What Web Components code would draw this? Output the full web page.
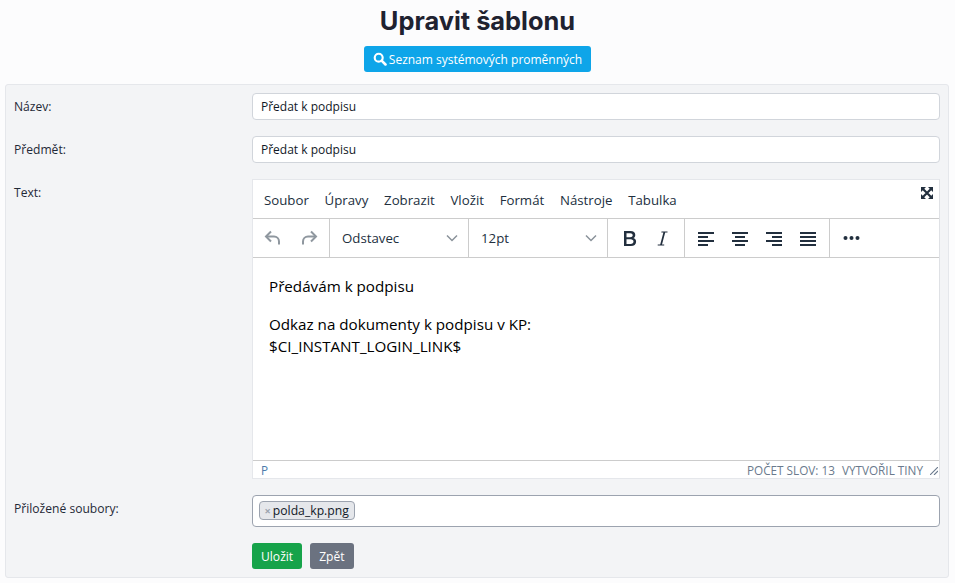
<!DOCTYPE html>
<html lang="cs">
<head>
<meta charset="utf-8">
<title>Upravit šablonu</title>
<style>
    html, body { margin: 0; padding: 0; }
    body {
        background: #fcfcfd;
        color: #212529;
        font-family: "Open Sans", "Noto Sans", sans-serif;
        font-size: 12.1px;
        height: 583px;
        overflow: hidden;
    }
</style>
</head>
<body>
<page-header heading="Upravit šablonu" action="Seznam systémových proměnných"></page-header>
<form-card>
    <form-row label="Název:" gap="16"><text-field value="Předat k podpisu"></text-field></form-row>
    <form-row label="Předmět:" gap="16"><text-field value="Předat k podpisu"></text-field></form-row>
    <form-row label="Text:" gap="16">
        <tiny-editor words="13">
            <p>Předávám k podpisu</p>
            <p>Odkaz na dokumenty k podpisu v KP:<br>$CI_INSTANT_LOGIN_LINK$</p>
        </tiny-editor>
    </form-row>
    <form-row label="Přiložené soubory:" gap="16"><file-tags><file-tag>polda_kp.png</file-tag></file-tags></form-row>
    <form-row>
        <div style="display:flex;gap:8px">
            <action-button color="#16a34a">Uložit</action-button>
            <action-button color="#6b7280">Zpět</action-button>
        </div>
    </form-row>
</form-card>

<script>
class PageHeader extends HTMLElement {
    constructor() {
        super()
        this.attachShadow({mode: 'open'})
    }

    connectedCallback() {
        this.shadowRoot.innerHTML = `
        <style>
            :host { display: flex; flex-direction: column; align-items: center; height: 84px; }
            h1 {
                margin: 0;
                padding-top: 4px;
                height: 46px;
                box-sizing: border-box;
                font: 700 25.4px/34px Inter, "Noto Sans", sans-serif;
                color: #1f2230;
            }
            a {
                display: flex;
                align-items: center;
                gap: 2px;
                height: 26px;
                padding: 0 9px;
                border-radius: 3px;
                background: #0ea5e9;
                color: #fff;
                font-size: 12px;
            }
            svg { width: 14px; height: 14px; }
        </style>
        <h1>${this.getAttribute('heading')}</h1>
        <a>
            <svg viewBox="0 0 13 13"><circle cx="5.3" cy="5.3" r="3.7" fill="none" stroke="#fff" stroke-width="2"/><path d="M8 8l3.6 3.6" stroke="#fff" stroke-width="2.4" stroke-linecap="round"/></svg>
            <span>${this.getAttribute('action')}</span>
        </a>`
    }
}

class FormCard extends HTMLElement {
    constructor() {
        super()
        this.attachShadow({mode: 'open'})
        this.shadowRoot.innerHTML = `
        <style>
            :host {
                display: flex;
                flex-direction: column;
                box-sizing: border-box;
                width: 944px;
                height: 494px;
                margin-left: 5px;
                padding: 8px;
                background: #f3f4f6;
                border: 1px solid #e5e7eb;
                border-radius: 3px;
            }
        </style>
        <slot></slot>`
    }
}

class FormRow extends HTMLElement {
    constructor() {
        super()
        this.attachShadow({mode: 'open'})
    }

    connectedCallback() {
        const label = this.getAttribute('label') || ''
        const gap = this.getAttribute('gap') || 0
        this.shadowRoot.innerHTML = `
        <style>
            :host { display: grid; grid-template-columns: 238px 688px; margin-bottom: ${gap}px; }
            label { padding-top: 6px; line-height: 16px; color: #1f2937; }
        </style>
        <label>${label}</label>
        <div><slot></slot></div>`
    }
}

class TextField extends HTMLElement {
    constructor() {
        super()
        this.attachShadow({mode: 'open'})
    }

    connectedCallback() {
        this.shadowRoot.innerHTML = `
        <style>
            :host { display: block; }
            input {
                display: block;
                width: 100%;
                height: 27px;
                box-sizing: border-box;
                padding: 0 8px;
                border: 1px solid #d1d5db;
                border-radius: 4px;
                background: #fff;
                color: #111827;
                font: 12px "Open Sans", sans-serif;
                outline: none;
            }
        </style>
        <input value="${this.getAttribute('value')}">`
    }
}

class TinyEditor extends HTMLElement {
    constructor() {
        super()
        this.attachShadow({mode: 'open'})
    }

    connectedCallback() {
        const menus = ['Soubor', 'Úpravy', 'Zobrazit', 'Vložit', 'Formát', 'Nástroje', 'Tabulka']
        this.shadowRoot.innerHTML = `
        <style>
            :host {
                display: flex;
                flex-direction: column;
                height: 300px;
                box-sizing: border-box;
                background: #fff;
                border: 1px solid #e5e7eb;
                border-right-color: #dfe1e5;
                color: #222f3e;
                position: relative;
            }
            .menu {
                display: flex;
                gap: 15.7px;
                align-items: center;
                height: 39px;
                padding-left: 11px;
                padding-top: 1px;
                box-sizing: border-box;
                font-size: 13.25px;
                border-bottom: 1px solid #ccc;
            }
            .full { position: absolute; top: 7px; right: 6px; width: 12px; height: 12px; }
            .tools { display: flex; height: 39px; box-sizing: border-box; border-bottom: 1px solid #ccc; }
            .group { display: flex; align-items: center; border-right: 1px solid #ccc; box-sizing: border-box; }
            .group:last-child { border-right: 0; }
            .undo { width: 77px; padding-left: 8px; gap: 12px; }
            .select {
                justify-content: space-between;
                font-size: 13.25px;
                padding: 0 10px 0 12px;
                width: 139px;
            }
            .style { width: 77px; padding-left: 11px; gap: 12px; }
            .align { width: 145px; padding-left: 9px; gap: 10px; }
            .more { padding-left: 13px; }
            .content {
                flex: 1;
                padding: 17px 16px 0;
                font-size: 15.2px;
                line-height: 22.4px;
                color: #000;
            }
            ::slotted(p) { margin: 0 0 15.6px; }
            .status {
                display: flex;
                align-items: center;
                height: 18px;
                box-sizing: border-box;
                border-top: 1px solid #ccc;
                padding: 0 0 0 8px;
                font-size: 11.75px;
                color: #6a7a8d;
            }
            .path { color: #4b7bab; flex: 1; }
            .status span + span { margin-right: 7px; }
            svg { display: block; flex: none; }
            .grip { margin: 2px 1px 0 0; }
        </style>
        <div class="menu">${menus.map(m => `<span>${m}</span>`).join('')}</div>
        <svg class="full" viewBox="0 0 12 12">
            <path fill="#222f3e" d="M0 0h5L0 5zM12 0v5L7 0zM0 12V7l5 5zM12 12H7l5-5z"/>
            <path stroke="#222f3e" stroke-width="2.2" d="M2 2l8 8M10 2l-8 8"/>
        </svg>
        <div class="tools">
            <div class="group undo">
                <svg width="24" height="24" viewBox="0 0 24 24" fill="none" stroke="#8f979f" stroke-width="2"><path d="M10 5.500L5 10.500l5 5"/><path d="M5.500 10.500h7.500a5 5 0 0 1 5 5v3"/></svg>
                <svg width="24" height="24" viewBox="0 0 24 24" fill="none" stroke="#8f979f" stroke-width="2"><path d="M14 5.500l5 5-5 5"/><path d="M18.500 10.500h-7.500a5 5 0 0 0-5 5v3"/></svg>
            </div>
            <div class="group select"><span>Odstavec</span>
                <svg width="12" height="8" viewBox="0 0 12 8" fill="none" stroke="#8a929a" stroke-width="1.500"><path d="M1 1.500l5 5 5-5"/></svg>
            </div>
            <div class="group select"><span>12pt</span>
                <svg width="12" height="8" viewBox="0 0 12 8" fill="none" stroke="#8a929a" stroke-width="1.500"><path d="M1 1.500l5 5 5-5"/></svg>
            </div>
            <div class="group style">
                <svg width="21" height="24" viewBox="0 0 21 24" fill="#222f3e"><path fill-rule="evenodd" d="M5 5h6.500c3 0 4.800 1.500 4.800 3.900 0 1.500-.8 2.700-2 3.200 1.700.4 2.800 1.800 2.800 3.600 0 2.700-2 4.300-5.200 4.300H5zm2.500 2.200v4h3.600c1.600 0 2.600-.8 2.600-2s-1-2-2.600-2zm0 6.100v4.600h4.100c1.800 0 2.900-.9 2.900-2.300s-1.100-2.300-2.900-2.300z"/></svg>
                <svg width="20" height="24" viewBox="0 0 20 24" fill="#222f3e"><path d="M9.500 5.500h6v1h-2.300L10 18.500h2.200v1h-6.500v-1h2.500L11.400 6.500H9.300z"/></svg>
            </div>
            <div class="group align">
                <svg width="24" height="24" viewBox="0 0 24 24" fill="#222f3e"><path d="M4 6h16v2H4zM4 10h10v2H4zM4 14h16v2H4zM4 18h10v2H4z"/></svg>
                <svg width="24" height="24" viewBox="0 0 24 24" fill="#222f3e"><path d="M4 6h16v2H4zM7 10h10v2H7zM4 14h16v2H4zM7 18h10v2H7z"/></svg>
                <svg width="24" height="24" viewBox="0 0 24 24" fill="#222f3e"><path d="M4 6h16v2H4zM10 10h10v2H10zM4 14h16v2H4zM10 18h10v2H10z"/></svg>
                <svg width="24" height="24" viewBox="0 0 24 24" fill="#222f3e"><path d="M4 6h16v2H4zM4 10h16v2H4zM4 14h16v2H4zM4 18h16v2H4z"/></svg>
            </div>
            <div class="group more">
                <svg width="18" height="24" viewBox="0 0 18 24" fill="#222f3e"><circle cx="2.500" cy="12" r="2"/><circle cx="8.500" cy="12" r="2"/><circle cx="14.500" cy="12" r="2"/></svg>
            </div>
        </div>
        <div class="content"><slot></slot></div>
        <div class="status">
            <span class="path">P</span>
            <span>POČET SLOV: ${this.getAttribute('words')}</span>
            <span>VYTVOŘIL TINY</span>
            <svg class="grip" width="8" height="8" viewBox="0 0 8 8" stroke="#6a7a8d" stroke-width="1.100"><path d="M0 8L8 0M4 8L8 4"/></svg>
        </div>`
    }
}

class FileTags extends HTMLElement {
    constructor() {
        super()
        this.attachShadow({mode: 'open'})
        this.shadowRoot.innerHTML = `
        <style>
            :host {
                display: flex;
                align-items: center;
                box-sizing: border-box;
                height: 32px;
                padding: 0 6px;
                background: #fff;
                border: 1px solid #9ca3af;
                border-radius: 4px;
            }
        </style>
        <slot></slot>`
    }
}

class FileTag extends HTMLElement {
    constructor() {
        super()
        this.attachShadow({mode: 'open'})
        this.shadowRoot.innerHTML = `
        <style>
            :host {
                display: flex;
                align-items: center;
                gap: 2px;
                box-sizing: border-box;
                height: 19px;
                margin-top: -2px;
                padding: 0 5px 0 4.5px;
                background: #e5e7eb;
                border: 1px solid #9ca3af;
                border-radius: 4px;
                color: #111827;
                font-size: 12.2px;
            }
            b { color: #9ca3af; font-size: 11px; font-weight: 700; }
        </style>
        <b>×</b><slot></slot>`
    }
}

class ActionButton extends HTMLElement {
    constructor() {
        super()
        this.attachShadow({mode: 'open'})
    }

    connectedCallback() {
        this.shadowRoot.innerHTML = `
        <style>
            :host {
                display: flex;
                align-items: center;
                height: 26px;
                padding: 0 9px;
                border-radius: 3px;
                color: #fff;
                background: ${this.getAttribute('color')};
            }
        </style>
        <slot></slot>`
    }
}

customElements.define('page-header', PageHeader)
customElements.define('form-card', FormCard)
customElements.define('form-row', FormRow)
customElements.define('text-field', TextField)
customElements.define('tiny-editor', TinyEditor)
customElements.define('file-tags', FileTags)
customElements.define('file-tag', FileTag)
customElements.define('action-button', ActionButton)
</script>
</body>
</html>
